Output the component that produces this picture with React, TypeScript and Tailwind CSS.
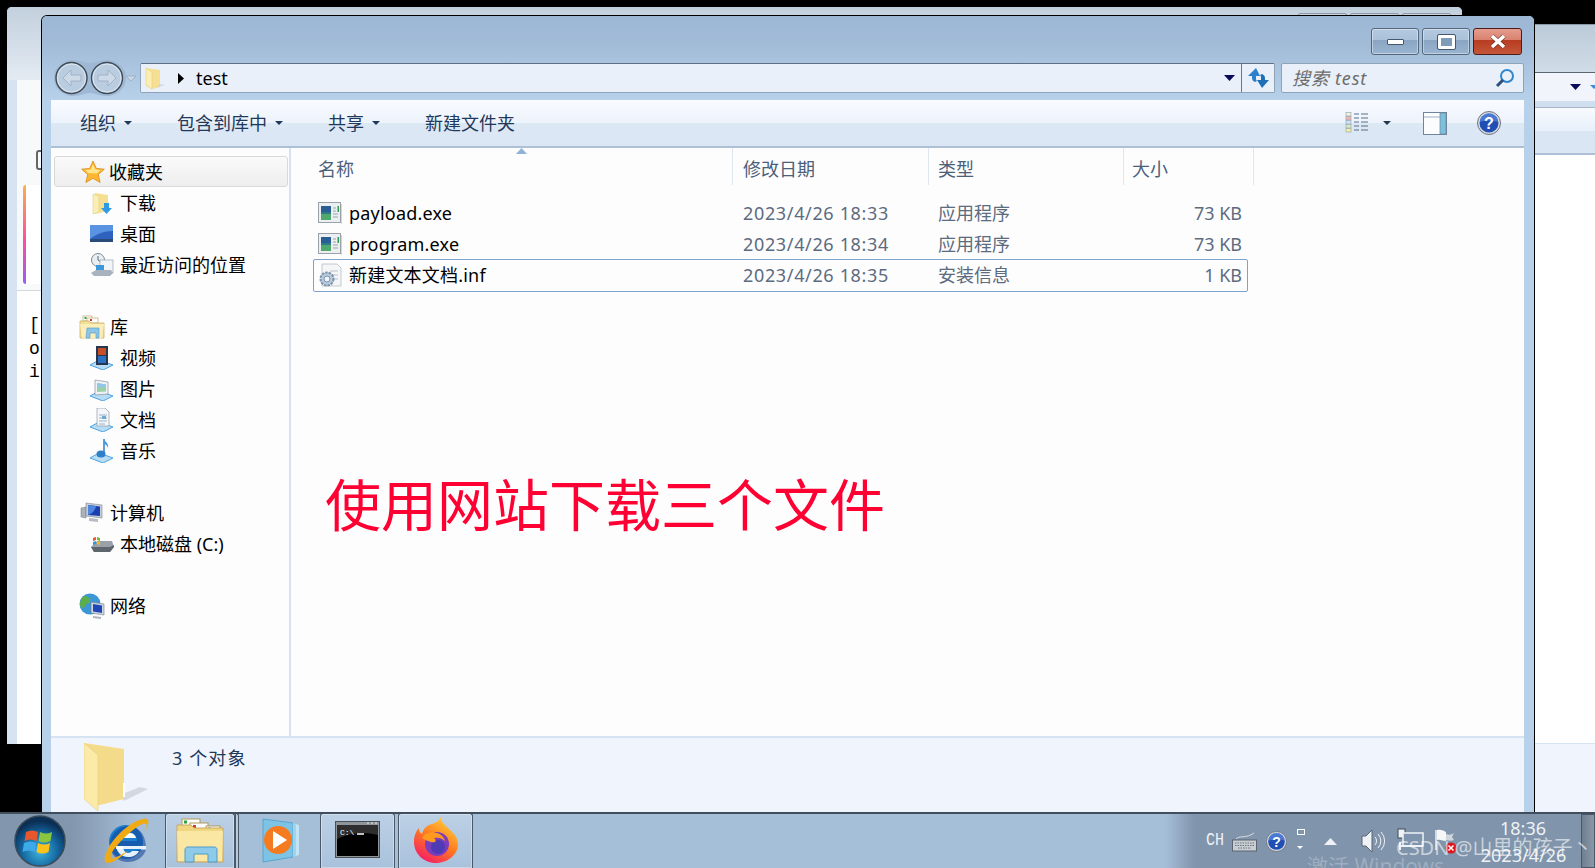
import React from "react";

const FONT = "font-['Noto_Sans','Noto_Sans_CJK_SC',sans-serif]";

function Tri({ c = "#1e395b", w = 8, h = 4 }: { c?: string; w?: number; h?: number }) {
  return (
    <svg width={w} height={h} viewBox="0 0 8 4" preserveAspectRatio="none" className="shrink-0">
      <path d="M0 0h8L4 4z" fill={c} />
    </svg>
  );
}

function Folder({ size = 24 }: { size?: number }) {
  return (
    <svg width={size} height={size} viewBox="0 0 24 24" className="shrink-0">
      <path d="M3 2l14 2v17l-4 1-3 1-7-3z" fill="#f6df93" />
      <path d="M3 2l6 4v17l-6-4z" fill="#fbeeb4" stroke="#e0c873" strokeWidth=".5" />
      <path d="M17 18l5 1-9 3z" fill="#c8ccd2" opacity=".6" />
    </svg>
  );
}

function DownFolder() {
  return (
    <svg width="24" height="24" viewBox="0 0 24 24" className="shrink-0">
      <path d="M5 2l13 2v16l-13 3z" fill="#f6df93" />
      <path d="M3 3l6 2v16l-6 2z" fill="#fbeeb4" stroke="#dfc878" strokeWidth=".5" />
      <path d="M14 12h5v5h3l-5.500 6-5.500-6h3z" fill="#2f9ae6" />
    </svg>
  );
}

function Star() {
  return (
    <svg width="24" height="24" viewBox="0 0 24 24" className="shrink-0">
      <path d="M12 1l3.300 7.400 8 .8-6 5.300 1.800 8L12 18.300 4.900 22.500l1.800-8-6-5.300 8-.8z" fill="#fdb62f" stroke="#d98a19" strokeWidth=".8" />
      <path d="M12 4l2.300 5.400 5.500.6-4.200 3.500-8.600-.5-2.700-3 5.500-.6z" fill="#ffe58c" />
    </svg>
  );
}

function DesktopIcon() {
  return (
    <svg width="24" height="24" viewBox="0 0 24 24" className="shrink-0">
      <rect x="0" y="3" width="23" height="17" fill="#2f62bf" />
      <path d="M0 3h23v6C14 9 6 12 0 17z" fill="#5b93e3" />
      <rect x="0" y="17" width="23" height="3" fill="#2c4a78" />
    </svg>
  );
}

function RecentIcon() {
  return (
    <svg width="24" height="24" viewBox="0 0 24 24" className="shrink-0">
      <circle cx="8" cy="7" r="6.500" fill="#e9eef3" stroke="#7d8996" />
      <path d="M8 3v4l3 2" stroke="#5b6a78" fill="none" />
      <rect x="10" y="7" width="13" height="13" fill="#f2f5f8" stroke="#98a4b0" strokeWidth=".7" />
      <rect x="6" y="12" width="8" height="6" fill="#3d97d9" />
      <path d="M1 20l5-3h15l2 3-3 3H4z" fill="#a9b3bd" />
    </svg>
  );
}

function LibIcon() {
  return (
    <svg width="26" height="24" viewBox="0 0 26 24" className="shrink-0">
      <rect x="4" y="1" width="9" height="5" fill="#fff" stroke="#b49a55" strokeWidth=".6" />
      <rect x="8" y="3" width="11" height="5" fill="#fff" stroke="#b49a55" strokeWidth=".6" />
      <rect x="5.500" y="2" width="2" height="2" fill="#2aa33d" />
      <rect x="11" y="4" width="2" height="2" fill="#d8392b" />
      <path d="M1 6h9l2 2h13v15H1z" fill="#f4df97" stroke="#c9a95e" strokeWidth=".7" />
      <path d="M1 9h24l-2 14H3z" fill="#fbeeb8" />
      <path d="M8 13h12v10h-3v-5h-6v5H7z" fill="#8cc5e6" stroke="#4d9bcb" strokeWidth=".6" />
    </svg>
  );
}

function Base() {
  return <path d="M0 19l9-5 14 5-10 5z" fill="#b7dcf4" stroke="#3f9be0" strokeWidth=".9" />;
}

function VideoIcon() {
  return (
    <svg width="24" height="24" viewBox="0 0 24 24" className="shrink-0">
      <Base />
      <rect x="6" y="0" width="12" height="19" fill="#26364e" />
      <rect x="8" y="2" width="8" height="7" fill="#c64f2a" />
      <rect x="8" y="10" width="8" height="7" fill="#2b71c2" />
    </svg>
  );
}

function PicIcon() {
  return (
    <svg width="24" height="24" viewBox="0 0 24 24" className="shrink-0">
      <Base />
      <path d="M5 3l13 2v12L5 18z" fill="#eef2f6" stroke="#8894a1" strokeWidth=".7" />
      <path d="M7 6l9 1.500v7L7 15z" fill="#9ad0a4" />
      <path d="M7 6l9 1.500v3L7 10z" fill="#8fc7ea" />
    </svg>
  );
}

function DocIcon() {
  return (
    <svg width="24" height="24" viewBox="0 0 24 24" className="shrink-0">
      <Base />
      <path d="M7 0h8l4 4v14H7z" fill="#f4f6f9" stroke="#8f9aa6" strokeWidth=".7" />
      <path d="M9 7h8M9 10h8M9 13h8M9 16h6" stroke="#8ea9c4" strokeWidth=".9" />
      <rect x="12" y="8" width="4" height="3" fill="#6fa9d6" />
    </svg>
  );
}

function MusicIcon() {
  return (
    <svg width="24" height="24" viewBox="0 0 24 24" className="shrink-0">
      <Base />
      <path d="M14 0v15" stroke="#2f7fc9" strokeWidth="1.500" />
      <path d="M14 0c1 3 5 4 4 9-1-3-3-4-4-4z" fill="#4a9be0" />
      <ellipse cx="11" cy="15" rx="4.500" ry="3.500" fill="#2f7fc9" />
    </svg>
  );
}

function ComputerIcon() {
  return (
    <svg width="24" height="24" viewBox="0 0 24 24" className="shrink-0">
      <path d="M1 7l5-1v11l-5-1z" fill="#aab1b8" stroke="#6e7680" strokeWidth=".5" />
      <path d="M6 2l16 2v13L6 15z" fill="#c7ced5" stroke="#7a838d" strokeWidth=".6" />
      <path d="M8 4l12 1.500V15L8 14z" fill="#1c3fb0" />
      <path d="M8 4l8 1c-1 5-4 8-8 9z" fill="#4f86e0" />
      <path d="M9 17l9 1v3l-9-1z" fill="#b5bcc3" />
    </svg>
  );
}

function DriveIcon() {
  return (
    <svg width="24" height="24" viewBox="0 0 24 24" className="shrink-0">
      <path d="M1 15l6-6h15l2 6-4 5H4z" fill="#9aa1a8" />
      <path d="M1 15h19l4-2v2l-4 5H4z" fill="#5f666d" />
      <path d="M3 6l3-1v3l-3 1z" fill="#e8572b" />
      <path d="M7 5l3 1v3l-3-1z" fill="#7cb82f" />
      <path d="M3 10l3-1v3l-3 1z" fill="#2b9be0" />
      <path d="M7 9l3 1v3l-3-1z" fill="#f7b91c" />
    </svg>
  );
}

function NetIcon() {
  return (
    <svg width="26" height="26" viewBox="0 0 26 26" className="shrink-0">
      <circle cx="11" cy="11" r="10.500" fill="#3b97d6" />
      <path d="M5 3c4 0 7 3 6 6-1 2-4 1-5 4s-3 2-5 0C1 8 2 5 5 3z" fill="#5cae4a" />
      <path d="M12 9l13 2v11l-13-2z" fill="#cfd6dd" stroke="#727b85" strokeWidth=".6" />
      <path d="M14 11l9 1.500v7.500l-9-1.500z" fill="#1f47b8" />
      <path d="M14 23l8 1v2l-8-1z" fill="#aeb5bc" />
    </svg>
  );
}

function ExeIcon() {
  return (
    <svg width="24" height="24" viewBox="0 0 24 24" className="shrink-0">
      <rect x=".5" y="1.500" width="22" height="20" fill="#eceff2" stroke="#9aa1a8" />
      <rect x="23" y="3" width="1" height="20" fill="#d3d6d9" />
      <rect x="3" y="5" width="10" height="14" fill="#2e7a86" />
      <rect x="3" y="5" width="10" height="6" fill="#2b5d95" />
      <rect x="3" y="13" width="10" height="6" fill="#4fa86c" />
      <path d="M15 7h3M15 10h3M15 13h5M15 16h5" stroke="#9aa4ac" strokeWidth="1" />
      <rect x="19.500" y="5" width="1.500" height="6" fill="#2e9c4f" />
    </svg>
  );
}

function InfIcon() {
  return (
    <svg width="24" height="24" viewBox="0 0 24 24" className="shrink-0">
      <path d="M4 1h15l4 4v18H4z" fill="#f4f6f8" stroke="#b7bfc7" strokeWidth=".8" />
      <path d="M12 8h8M14 12h6M14 16h6" stroke="#b9c2cb" />
      <circle cx="9" cy="16" r="6.500" fill="#b9cbdc" stroke="#7c93aa" strokeDasharray="2.500 1" strokeWidth="2" />
      <circle cx="9" cy="16" r="3" fill="#f0f4f8" stroke="#7c93aa" />
    </svg>
  );
}

function NavRow({ icon, label, indent }: { icon: React.ReactNode; label: string; indent?: boolean }) {
  return (
    <div className={`h-[31px] flex items-center ${indent ? "pl-[39px]" : "pl-[29px]"}`}>
      <span className="w-[24px] mr-[6px] flex justify-center">{icon}</span>
      <span className="text-[18px] text-black leading-none whitespace-nowrap">{label}</span>
    </div>
  );
}

function HeaderCell({ label, w, pl }: { label: string; w: string; pl: string }) {
  return (
    <div className={`${w} ${pl} h-full pt-[5px] flex items-center border-r border-[#dfe7f2] text-[18px] text-[#4c607a]`}>{label}</div>
  );
}

function FileRow({ icon, name, date, kind, size, selected }: { icon: React.ReactNode; name: string; date: string; kind: string; size: string; selected?: boolean }) {
  return (
    <div className={`ml-[22px] w-[935px] flex items-center rounded-[2px] border ${selected ? "h-[33px] pb-[2px] border-[#7da2ce]" : "h-[31px] border-transparent"}`}>
      <span className="w-[35px] pl-[4px] flex">{icon}</span>
      <span className="w-[394px] text-[18px] tracking-[0.2px] text-black leading-none whitespace-nowrap">{name}</span>
      <span className="w-[195px] text-[18px] tracking-[0.65px] text-[#5c6b7e] leading-none whitespace-nowrap">{date}</span>
      <span className="w-[190px] text-[18px] text-[#5c6b7e] leading-none whitespace-nowrap">{kind}</span>
      <span className="w-[114px] text-right text-[18px] text-[#5c6b7e] leading-none whitespace-nowrap">{size}</span>
    </div>
  );
}

function TaskButton({ children, w }: { children: React.ReactNode; w: string }) {
  return (
    <div className={`${w} h-[55px] pb-[3px] flex items-center justify-center rounded-t-[3px] border border-b-0 border-[#4b5868] bg-[linear-gradient(180deg,#bcd0e5,#a9c2dc)] shadow-[inset_0_0_0_1px_rgba(255,255,255,0.35)]`}>
      {children}
    </div>
  );
}

function BehindLeft() {
  return (
    <div className="absolute left-[6px] top-[6px] w-[1457px] h-[739px] rounded-t-[6px] border border-black bg-[#d6e4f2] overflow-hidden">
      <div className="h-[73px] bg-[linear-gradient(180deg,#c2d0dd,#e4ebf3)] flex justify-end pr-[11px] gap-[3px]">
        <div className="w-[49px] h-[10px] mt-[6px] border border-[#8e9aa6] rounded-[2px]" />
        <div className="w-[49px] h-[10px] mt-[6px] border border-[#8e9aa6] rounded-[2px]" />
        <div className="w-[49px] h-[10px] mt-[6px] border border-[#8e9aa6] rounded-[2px]" />
      </div>
      <div className="ml-[10px] h-[665px] bg-[#f8f9fb]">
        <div className="h-[105px] relative">
          <div className="absolute left-[19px] top-[70px] w-[8px] h-[20px] rounded-[3px] border-2 border-[#666]" />
        </div>
        <div className="ml-[6px] h-[99px] w-[40px] rounded-l-[3px] bg-white flex">
          <div className="w-[3px] h-full rounded-l-[3px] bg-[linear-gradient(180deg,#fbb14a,#ff4f9a_55%,#9b5cf5)]" />
        </div>
        <div className="mt-[6px] h-[455px] bg-white border-t border-[#d5d8dc] pl-[12px] pt-[23px] font-['Liberation_Mono',monospace] text-[18px] leading-[23.500px] text-black">
          <div>[</div>
          <div>o</div>
          <div>i</div>
        </div>
      </div>
    </div>
  );
}

function BehindRight() {
  return (
    <div className="absolute left-[1534px] right-0 top-[24px] h-[788px] bg-[#f0f4fc] flex flex-col">
      <div className="h-[48px] bg-[linear-gradient(180deg,#bccbd9,#d0dce7)] border-t border-[#8d99a5]" />
      <div className="h-[29px] bg-[#f1f5fb] border-t border-[#5a6570] flex items-center pl-[36px]">
        <Tri c="#0a0a5a" w={11} h={6} />
        <div className="ml-[9px] w-px h-[29px] bg-[#6d7783]" />
        <Tri c="#3a8fd8" w={8} h={4} />
      </div>
      <div className="h-[7px] bg-[#cfdff0] border-b border-[#a9b8c8]" />
      <div className="h-[47px] bg-[linear-gradient(180deg,#f7fafe,#e8f0fa_50%,#dae6f4_50%,#dae6f4)] border-b-2 border-[#adc0d6]" />
      <div className="h-[589px] bg-white border-b border-[#d5e3f3]" />
      <div className="flex-1 bg-[#f0f4fc]" />
    </div>
  );
}

function Caption() {
  return (
    <div className="flex justify-end gap-[3px] pr-[2px] h-[27px]">
      <div className="w-[48px] h-[27px] rounded-[3px] border border-[#54677c] bg-[linear-gradient(180deg,#b3c9e0_0,#a9c1d9_45%,#8aa5c1_45%,#9ab5d1_100%)] shadow-[inset_0_0_0_1px_rgba(255,255,255,0.4)] flex items-center justify-center">
        <div className="w-[17px] h-[6px] mt-[1px] rounded-[1px] bg-white border border-[#46586d]" />
      </div>
      <div className="w-[48px] h-[27px] rounded-[3px] border border-[#54677c] bg-[linear-gradient(180deg,#b3c9e0_0,#a9c1d9_45%,#8aa5c1_45%,#9ab5d1_100%)] shadow-[inset_0_0_0_1px_rgba(255,255,255,0.4)] flex items-center justify-center">
        <div className="w-[17px] h-[14px] rounded-[1px] border-[3px] border-white outline outline-1 outline-[#46586d] bg-[#7f9cb9]" />
      </div>
      <div className="w-[49px] h-[27px] rounded-[3px] border border-[#4a1f1a] bg-[linear-gradient(180deg,#e59c8d_0,#d9806e_45%,#b83c21_45%,#c4563a_100%)] flex items-center justify-center">
        <svg width="18" height="15" viewBox="0 0 18 15">
          <path d="M3 2l12 11M15 2L3 13" stroke="#3a1a16" strokeWidth="5" fill="none" opacity=".55" />
          <path d="M3 2l12 11M15 2L3 13" stroke="#fff" strokeWidth="3.500" fill="none" />
        </svg>
      </div>
    </div>
  );
}

function BackFwd() {
  return (
    <svg width="86" height="38" viewBox="0 0 86 38" className="shrink-0">
      <path d="M0 19C0 8 10 1 19 1c8 0 12 3 17 3s9-3 17-3c9 0 19 7 19 18s-10 18-19 18c-8 0-12-3-17-3s-9 3-17 3C10 37 0 30 0 19z" fill="#9fb8d3" />
      <circle cx="17.500" cy="19" r="15.500" fill="#b9cce0" stroke="#3f4a55" strokeWidth="1.400" />
      <circle cx="53" cy="19" r="15.500" fill="#b9cce0" stroke="#3f4a55" strokeWidth="1.400" />
      <circle cx="17.500" cy="19" r="14" fill="none" stroke="#dce7f2" strokeWidth="1" />
      <circle cx="53" cy="19" r="14" fill="none" stroke="#dce7f2" strokeWidth="1" />
      <path d="M9 19l8-8v5h10v6H17v5z" fill="#cdd9e6" stroke="#9db0c4" strokeWidth=".9" />
      <path d="M62 19l-8-8v5H44v6h10v5z" fill="#cdd9e6" stroke="#9db0c4" strokeWidth=".9" />
      <path d="M72 17h10l-5 5z" fill="#c9d7e6" stroke="#98abbf" strokeWidth=".8" />
    </svg>
  );
}

function Refresh() {
  return (
    <svg width="22" height="22" viewBox="0 0 22 22">
      <path d="M9 1L1 9h4v2c0 2 1 3 3 4l2-1c-1-1-1-2-1-3V9h4z" fill="#2c7fcb" />
      <path d="M15 21l7-8h-4v-2c0-2-1-3-3-4l-2 1c1 1 1 2 1 3v2h-4z" fill="#1f6fb8" />
    </svg>
  );
}

function ViewIcon() {
  return (
    <svg width="24" height="22" viewBox="0 0 24 22">
      <rect x="1" y=".5" width="5" height="3.500" fill="#eef3d8" stroke="#8ea0b3" strokeWidth=".6" />
      <rect x="1" y="4.500" width="5" height="3.500" fill="#f3b5ae" stroke="#8ea0b3" strokeWidth=".6" />
      <rect x="1" y="8.500" width="5" height="3.500" fill="#cfe3f4" stroke="#8ea0b3" strokeWidth=".6" />
      <rect x="1" y="12.500" width="5" height="3.500" fill="#d8ecc4" stroke="#8ea0b3" strokeWidth=".6" />
      <rect x="1" y="16.500" width="5" height="3.500" fill="#f6eea0" stroke="#8ea0b3" strokeWidth=".6" />
      <path d="M9 2h5M16 2h7M9 6h5M16 6h7M9 10h5M16 10h7M9 14h5M16 14h7M9 18h5M16 18h7" stroke="#5b6f86" strokeWidth="1" />
    </svg>
  );
}

function PaneIcon() {
  return (
    <svg width="24" height="23" viewBox="0 0 24 23">
      <rect x=".5" y=".5" width="23" height="22" fill="#fbfcfe" stroke="#6f859c" />
      <path d="M1 5h16" stroke="#9fb0c2" />
      <rect x="17" y="1" width="6" height="21" fill="#7cc0dc" stroke="#6f859c" strokeWidth=".7" />
    </svg>
  );
}

function HelpIcon({ size = 24 }: { size?: number }) {
  return (
    <svg width={size} height={size} viewBox="0 0 24 24" className="shrink-0">
      <circle cx="12" cy="12" r="11.500" fill="#d6dae0" stroke="#6c7480" />
      <circle cx="12" cy="12" r="9.500" fill="#1f4fb4" />
      <path d="M3 11a9 9 0 0 1 18 0c-5-2-12-2-18 0z" fill="#5b8be0" opacity=".7" />
      <text x="12" y="18" textAnchor="middle" fontSize="16" fontWeight="700" fill="#fff" fontFamily="Liberation Sans, sans-serif">?</text>
    </svg>
  );
}

function Orb() {
  return (
    <svg width="52" height="52" viewBox="0 0 52 52" className="shrink-0">
      <defs>
        <radialGradient id="orb" cx="50%" cy="70%" r="60%">
          <stop offset="0" stopColor="#3fb6e0" />
          <stop offset=".6" stopColor="#14659e" />
          <stop offset="1" stopColor="#0b2f55" />
        </radialGradient>
      </defs>
      <circle cx="26" cy="26" r="25" fill="url(#orb)" stroke="#3a4a58" strokeWidth="1.500" />
      <path d="M12 17c4-2 8-2 12 0l-1.500 9c-4-2-8-2-12 0z" fill="#e8572b" />
      <path d="M26 17c4 2 8 2 12 0l-1.500 9c-4 2-8 2-12 0z" fill="#8cc63f" />
      <path d="M10 28c4-2 8-2 12 0l-1.500 9c-4-2-8-2-12 0z" fill="#3da9e8" />
      <path d="M24 28c4 2 8 2 12 0l-1.500 9c-4 2-8 2-12 0z" fill="#fcc21b" />
    </svg>
  );
}

function IE() {
  return (
    <svg width="50" height="48" viewBox="0 0 50 48" className="shrink-0">
      <circle cx="26" cy="25" r="17" fill="#1c7fd0" />
      <path d="M18 24h19c0-6-4-9-9-9s-10 3-10 9zM18 29c1 6 5 9 10 9 4 0 7-2 9-5h9c-3 8-10 12-18 12-10 0-18-7-18-17S18 9 28 9s17 7 18 20z" fill="#123f94" opacity=".55" />
      <path d="M16 29h30v3H16z" fill="#e8f2fb" />
      <path d="M24 21h12c-.5-3-3-5-6-5s-5.500 2-6 5z" fill="#fff" />
      <path d="M16 29c1 7 6 11 12 11 5 0 9-2 11-6h-7c-1 1-2 2-4 2-3 0-5-3-5-7z" fill="#fff" opacity=".9" />
      <path d="M47 2c-8-3-30 13-38 28C5 38 2 46 8 46c5 0 13-6 20-12-6 3-15 9-17 7-2-3 4-11 12-19C32 13 42 5 46 7c2 1 0 5-2 8 4-4 6-11 3-13z" fill="#f0aa13" />
    </svg>
  );
}

function ExplorerIcon() {
  return (
    <svg width="48" height="46" viewBox="0 0 48 46">
      <rect x="6" y="2" width="18" height="8" fill="#fff" stroke="#b29a58" />
      <rect x="14" y="6" width="18" height="8" fill="#fff" stroke="#b29a58" />
      <rect x="30" y="9" width="14" height="6" fill="#fff" stroke="#b29a58" />
      <rect x="8" y="3.500" width="3" height="3" fill="#2aa33d" />
      <rect x="17" y="8" width="3" height="3" fill="#d8392b" />
      <rect x="32" y="10.500" width="3" height="3" fill="#2b8fd6" />
      <path d="M1 8h14l3 3h29v34H1z" fill="#f0d681" stroke="#c9a95e" />
      <path d="M1 14h46l-1 30H2z" fill="#f9e7a3" />
      <path d="M12 30h26c2 0 3 1 3 3v12H32v-8H18v8H9V33c0-2 1-3 3-3z" fill="#8ecbe8" stroke="#4d9bcb" />
    </svg>
  );
}

function MediaIcon() {
  return (
    <svg width="48" height="46" viewBox="0 0 48 46">
      <path d="M6 1l30 4v34L6 44z" fill="#7cc3e6" stroke="#5aa4cf" />
      <path d="M36 5l3 1v32l-3 1z" fill="#9ed4ee" />
      <path d="M39 6l3 1v30l-3 1z" fill="#c3e4f4" />
      <circle cx="21" cy="22" r="14" fill="#f47b20" />
      <path d="M16 13l14 9-14 9z" fill="#fff" />
    </svg>
  );
}

function CmdIcon() {
  return (
    <svg width="45" height="37" viewBox="0 0 45 37">
      <rect x=".5" y=".5" width="44" height="36" fill="#8f959b" stroke="#4a4f55" />
      <rect x="2" y="4" width="41" height="31" fill="#000" />
      <path d="M2 4h41v10C28 10 14 12 2 18z" fill="#fff" opacity=".18" />
      <path d="M32 2h2M36 2h2M40 2h2" stroke="#eee" />
      <text x="5" y="14" fontSize="8" fill="#fff" fontFamily="Liberation Mono, monospace">C:\</text>
      <path d="M22 13h7" stroke="#fff" strokeWidth="1.500" />
    </svg>
  );
}

function FirefoxIcon() {
  return (
    <svg width="46" height="48" viewBox="0 0 46 48">
      <defs>
        <linearGradient id="ffa" x1="0.8" y1="0" x2="0.2" y2="1">
          <stop offset="0" stopColor="#ffd53d" />
          <stop offset=".5" stopColor="#ff7a1f" />
          <stop offset="1" stopColor="#f5156c" />
        </linearGradient>
      </defs>
      <path d="M23 47C10 47 1 37 1 26 1 20 3 15 6 12c0 3 1 5 3 6 1-5 5-9 10-10 3-1 7-3 9-7 0 5 3 7 7 11 6 5 10 10 10 17C45 38 35 47 23 47z" fill="url(#ffa)" />
      <circle cx="24" cy="28" r="12" fill="#7b3dbb" />
      <circle cx="25" cy="31" r="7" fill="#4f3ab5" />
      <path d="M9 22c3-5 9-7 15-5 4 1 7 4 8 8-3-3-7-4-11-3 2 1 2 3 1 4-3 1-8-1-13-4z" fill="#ff9a1f" />
    </svg>
  );
}

function Tray() {
  return (
    <>
      <span className="font-['Liberation_Mono',monospace] text-[15px] text-[#eef2f6] scale-y-125 ml-[2px] w-[26px]">CH</span>
      <svg width="25" height="21" viewBox="0 0 25 21" className="shrink-0">
        <path d="M4 8c3-4 10 0 18-6" stroke="#d8dde2" fill="none" />
        <rect x=".5" y="9" width="24" height="11" fill="#c9ced3" stroke="#5b6570" />
        <path d="M3 12h19M3 14.500h19M6 17h13" stroke="#6b747e" strokeDasharray="1.500 1" />
      </svg>
      <span className="ml-[9px] flex"><HelpIcon size={21} /></span>
      <span className="ml-[10px] w-[27px] h-[28px] flex flex-col items-start">
        <span className="w-[8px] h-[6px] mt-[2px] border border-white" />
        <span className="mt-[11px]"><Tri c="#fff" w={6} h={3} /></span>
      </span>
      <span className="w-[37px] flex"><svg width="13" height="7" viewBox="0 0 13 7"><path d="M6.500 0L13 7H0z" fill="#eef2f6" /></svg></span>
      <svg width="24" height="26" viewBox="0 0 24 26" className="shrink-0">
        <path d="M1 8h4l6-6v22l-6-6H1z" fill="#eef2f6" stroke="#5b6570" />
        <path d="M14 9a6 6 0 0 1 0 8M17 6a10 10 0 0 1 0 14M20 4a13 13 0 0 1 0 18" stroke="#eef2f6" fill="none" />
      </svg>
      <svg width="28" height="28" viewBox="0 0 28 28" className="ml-[12px] shrink-0">
        <rect x="1" y="2" width="7" height="9" fill="#eef2f6" stroke="#404a55" />
        <rect x="6" y="6" width="20" height="13" fill="#7f95ad" stroke="#eef2f6" strokeWidth="1.500" />
        <path d="M3 15v8M3 19h22" stroke="#eef2f6" strokeWidth="2" />
      </svg>
      <svg width="24" height="26" viewBox="0 0 24 26" className="ml-[9px] shrink-0">
        <path d="M2 2v20" stroke="#eef2f6" strokeWidth="1.500" />
        <path d="M3 2c4-1 7 1 9 2v9c-3 0-6-2-9-1z" fill="#f4f6f8" />
        <path d="M12 6c3 1 5 1 8-1l-2 4 2 3c-2 1-5 1-8 0z" fill="#cfd6dc" />
        <circle cx="17" cy="20" r="5.500" fill="#e0141c" />
        <path d="M14.500 17.500l5 5M19.500 17.500l-5 5" stroke="#fff" strokeWidth="1.500" />
      </svg>
    </>
  );
}

export default function App() {
  return (
    <div className={`${FONT} w-[1595px] h-[868px] flex flex-col bg-black overflow-hidden`}>
      <div className="relative h-[812px] shrink-0">
        <BehindLeft />
        <BehindRight />

        <div className="absolute left-[41px] top-[15px] w-[1494px] h-[797px] rounded-t-[6px] border border-b-0 border-black bg-[#b8d1ea] flex flex-col overflow-hidden">
          <div className="h-[84px] shrink-0 bg-[linear-gradient(180deg,#9cb7d4,#a2bcd8_35%,#b8d1ea_100%)] pl-[9px] pr-[10px]">
            <div className="pt-[12px]">
              <Caption />
            </div>
            <div className="mt-[8px] h-[30px] flex items-center">
              <div className="ml-[3px]"><BackFwd /></div>
              <div className="w-[1135px] h-[30px] rounded-[2px] border border-[#8fa3b8] border-t-[#5f6f80] bg-[#e9f0f9] flex items-center">
                <span className="ml-[2px] w-[26px] flex"><Folder size={24} /></span>
                <span className="ml-[9px]"><svg width="6" height="11" viewBox="0 0 6 11"><path d="M0 0l6 5.500L0 11z" fill="#000" /></svg></span>
                <span className="ml-[12px] text-[18px] text-black leading-none">test</span>
                <span className="ml-auto"><Tri c="#0a0a5a" w={11} h={6} /></span>
                <span className="ml-[6px] w-px h-full bg-[#6d7783]" />
                <span className="w-[32px] flex justify-center"><Refresh /></span>
              </div>
              <div className="ml-[6px] w-[243px] h-[30px] rounded-[2px] border border-[#8fa3b8] bg-[#e9f0f9] flex items-center pl-[10px] pr-[8px]">
                <span className="italic text-[18px] tracking-[0.8px] text-[#6d6d6d] leading-none">搜索 test</span>
                <span className="ml-auto flex">
                  <svg width="20" height="20" viewBox="0 0 20 20">
                    <circle cx="12" cy="8" r="6" fill="none" stroke="#2f86cf" strokeWidth="2" />
                    <path d="M8 12l-6 6" stroke="#2a4f78" strokeWidth="3" />
                  </svg>
                </span>
              </div>
            </div>
          </div>

          <div className="flex-1 ml-[9px] mr-[10px] flex flex-col min-h-0">
            <div className="h-[48px] shrink-0 border-b-2 border-[#adc0d6] bg-[linear-gradient(180deg,#f9fbff_0,#edf3fb_50%,#dde8f5_50%,#dae6f4_100%)] flex items-center text-[18px] text-[#1e395b]">
              <div className="pl-[29px] w-[126px] flex items-center gap-[8px]"><span>组织</span><Tri /></div>
              <div className="w-[151px] flex items-center gap-[8px]"><span>包含到库中</span><Tri /></div>
              <div className="w-[97px] flex items-center gap-[8px]"><span>共享</span><Tri /></div>
              <div className="w-[100px]">新建文件夹</div>
              <div className="ml-auto flex items-center pr-[23px]">
                <ViewIcon />
                <span className="ml-[14px]"><Tri c="#24364e" w={8} h={4} /></span>
                <span className="ml-[32px] flex"><PaneIcon /></span>
                <span className="ml-[30px] flex"><HelpIcon /></span>
              </div>
            </div>

            <div className="relative h-[588px] shrink-0 bg-[#fdfdfe] flex">
              <div className="w-[238px] shrink-0 pt-[8px]">
                <div className="ml-[3px] w-[234px] h-[31px] rounded-[3px] border border-[#d9d9d9] bg-[linear-gradient(180deg,#fafafa,#eeeeee)] flex items-center pl-[26px]">
                  <span className="w-[24px] mr-[4px] flex"><Star /></span>
                  <span className="text-[18px] text-black leading-none">收藏夹</span>
                </div>
                <NavRow indent icon={<DownFolder />} label="下载" />
                <NavRow indent icon={<DesktopIcon />} label="桌面" />
                <NavRow indent icon={<RecentIcon />} label="最近访问的位置" />
                <div className="h-[31px]" />
                <NavRow icon={<LibIcon />} label="库" />
                <NavRow indent icon={<VideoIcon />} label="视频" />
                <NavRow indent icon={<PicIcon />} label="图片" />
                <NavRow indent icon={<DocIcon />} label="文档" />
                <NavRow indent icon={<MusicIcon />} label="音乐" />
                <div className="h-[31px]" />
                <NavRow icon={<ComputerIcon />} label="计算机" />
                <NavRow indent icon={<DriveIcon />} label="本地磁盘 (C:)" />
                <div className="h-[31px]" />
                <NavRow icon={<NetIcon />} label="网络" />
              </div>
              <div className="w-[2px] shrink-0 bg-[#d5e3f3]" />
              <div className="flex-1 min-w-0">
                <div className="relative h-[37px] flex">
                  <HeaderCell label="名称" w="w-[442px]" pl="pl-[27px]" />
                  <HeaderCell label="修改日期" w="w-[196px]" pl="pl-[10px]" />
                  <HeaderCell label="类型" w="w-[195px]" pl="pl-[9px]" />
                  <HeaderCell label="大小" w="w-[130px]" pl="pl-[8px]" />
                  <div className="absolute left-[225px] top-0">
                    <svg width="11" height="6" viewBox="0 0 11 6"><path d="M5.500 0L11 6H0z" fill="#8fb3d6" /></svg>
                  </div>
                </div>
                <div className="mt-[12px]">
                  <FileRow icon={<ExeIcon />} name="payload.exe" date="2023/4/26 18:33" kind="应用程序" size="73 KB" />
                  <FileRow icon={<ExeIcon />} name="program.exe" date="2023/4/26 18:34" kind="应用程序" size="73 KB" />
                  <FileRow selected icon={<InfIcon />} name="新建文本文档.inf" date="2023/4/26 18:35" kind="安装信息" size="1 KB" />
                </div>
              </div>
              <div className="absolute left-[274px] top-[322px] text-[56px] leading-[68px] text-[#ff0033] whitespace-nowrap">使用网站下载三个文件</div>
            </div>

            <div className="flex-1 border-t-2 border-[#d5e3f3] bg-[#f0f4fc] flex">
              <div className="ml-[33px] mt-[5px] relative">
                <svg width="64" height="70" viewBox="0 0 64 70">
                  <path d="M40 58l24 -12-8-2-20 8z" fill="#bcc2c9" opacity=".55" />
                  <path d="M0 0l40 6v50l-28 7z" fill="#f4db8a" />
                  <path d="M0 0l14 12v56L0 56z" fill="#fbeaa8" stroke="#e5cf80" strokeWidth=".6" />
                  <rect x="39" y="40" width="2" height="14" fill="#fff" />
                </svg>
              </div>
              <div className="ml-[24px] mt-[7px] text-[18px] tracking-[1.1px] text-[#1e395b] whitespace-pre">3 个对象</div>
            </div>
          </div>
        </div>
      </div>

      <div className="relative h-[56px] shrink-0 border-t-2 border-[#414e5e] bg-[linear-gradient(90deg,#8296ad_0,#8296ad_70px,#a6bfd9_140px,#a6bfd9_1165px,#8094ab_1195px,#8094ab_100%)] flex items-center overflow-hidden">
        <div className="ml-[14px] flex"><Orb /></div>
        <div className="ml-[34px] flex"><IE /></div>
        <div className="ml-[15px] self-end flex">
          <TaskButton w="w-[70px]"><ExplorerIcon /></TaskButton>
          <div className="w-[4px] border border-b-0 border-[#4b5868] rounded-tr-[3px] bg-[#b6cbe1]" />
        </div>
        <div className="ml-[18px] flex"><MediaIcon /></div>
        <div className="ml-[15px] self-end"><TaskButton w="w-[75px]"><CmdIcon /></TaskButton></div>
        <div className="ml-[3px] self-end"><TaskButton w="w-[75px]"><FirefoxIcon /></TaskButton></div>

        <div className="ml-[731px] flex items-center w-[260px]">
          <Tray />
        </div>

        <div className="absolute right-0 top-0 bottom-0 w-[14px] border border-[#4c5765] bg-[linear-gradient(90deg,#707f90,#8a99aa)]" />
        <div className="absolute left-[1490px] top-[2px] w-[66px] text-center text-[18px] leading-[24px] text-[#eef2f6]">18:36</div>
        <div className="absolute left-[1477px] top-[29px] w-[93px] text-center text-[18px] leading-[24px] text-[#eef2f6]">2023/4/26</div>
        <div className="absolute left-[1396px] top-[21px] text-[20px] leading-[26px] text-white/60 whitespace-nowrap">CSDN @山里的孩子丶</div>
        <div className="absolute left-[1307px] top-[38px] text-[21px] leading-[28px] text-white/25 whitespace-nowrap">激活 Windows</div>
      </div>
    </div>
  );
}
